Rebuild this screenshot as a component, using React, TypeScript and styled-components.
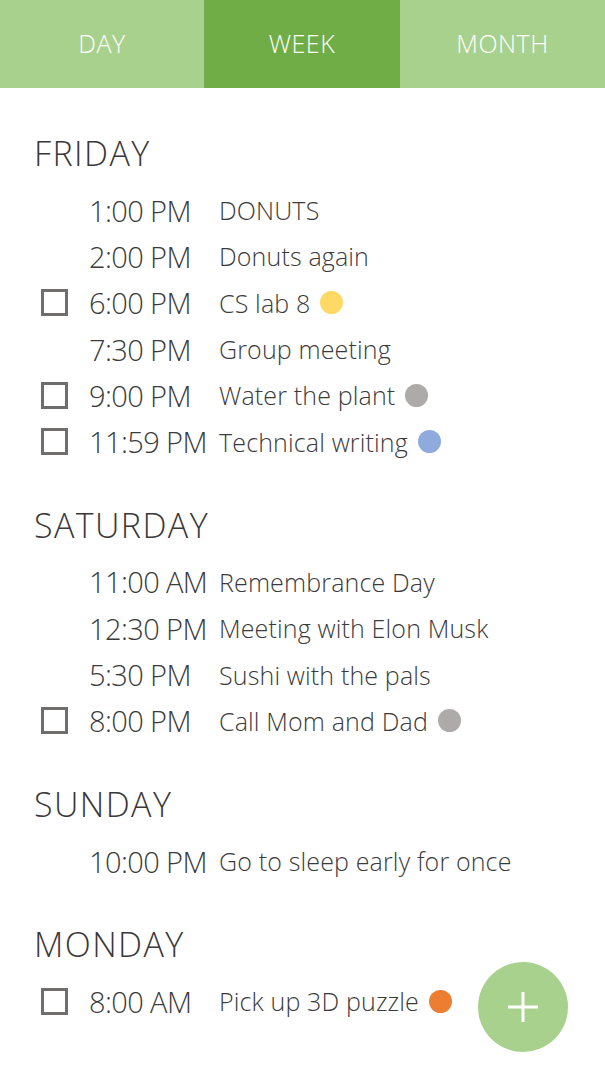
import React from "react";
import styled, { createGlobalStyle } from "styled-components";

const Global = createGlobalStyle`
  html, body { margin: 0; padding: 0; background: #ffffff; }
  body { font-family: "Open Sans", "Noto Sans", sans-serif; }
`;

const Page = styled.div`
  width: 605px;
  min-height: 1077px;
  position: relative;
  background: #fff;
  overflow: hidden;
`;

const Tabs = styled.nav`
  display: grid;
  grid-template-columns: 204px 196px 205px;
  height: 88px;
`;

const Tab = styled.div<{ $active?: boolean }>`
  display: flex;
  align-items: center;
  justify-content: center;
  padding-bottom: 2px;
  background: ${(p) => (p.$active ? "#70ad47" : "#a9d18e")};
  color: #ffffff;
  font-weight: 300;
  font-size: 25px;
  letter-spacing: 0.5px;
`;

const Content = styled.main`
  padding: 45px 0 0 34px;
  display: flex;
  flex-direction: column;
  gap: 40px;
`;

const Section = styled.section`
  display: flex;
  flex-direction: column;
`;

const DayHeading = styled.h2`
  margin: 0 0 14px 0;
  height: 40px;
  line-height: 40px;
  font-size: 34px;
  font-weight: 300;
  color: #3a3838;
  letter-spacing: 1.4px;
`;

const Row = styled.div`
  display: grid;
  grid-template-columns: 55px 130px auto;
  align-items: center;
  height: 46.3px;
`;

const CheckSlot = styled.div`
  display: flex;
  align-items: center;
  padding-left: 7px;
`;

const Box = styled.span`
  display: block;
  width: 27px;
  height: 27px;
  box-sizing: border-box;
  border: 3px solid #706d6d;
`;

const Time = styled.span`
  font-size: 29px;
  font-weight: 300;
  color: #3b3b3b;
  letter-spacing: -0.6px;
  white-space: nowrap;
`;

const Title = styled.span`
  display: flex;
  align-items: center;
  gap: 10px;
  font-size: 25px;
  font-weight: 300;
  color: #3b3b3b;
  letter-spacing: 0.15px;
  white-space: nowrap;
`;

const Dot = styled.span<{ $color: string }>`
  display: inline-block;
  width: 23px;
  height: 23px;
  border-radius: 50%;
  background: ${(p) => p.$color};
`;

const Fab = styled.button`
  position: absolute;
  left: 478px;
  top: 962px;
  width: 90px;
  height: 90px;
  border-radius: 50%;
  border: none;
  padding: 0;
  background: #a9d18e;
  display: flex;
  align-items: center;
  justify-content: center;
  cursor: pointer;
`;

type Item = { time: string; title: string; check?: boolean; dot?: string };
type Day = { name: string; items: Item[] };

const days: Day[] = [
  {
    name: "FRIDAY",
    items: [
      { time: "1:00 PM", title: "DONUTS" },
      { time: "2:00 PM", title: "Donuts again" },
      { time: "6:00 PM", title: "CS lab 8", check: true, dot: "#ffd966" },
      { time: "7:30 PM", title: "Group meeting" },
      { time: "9:00 PM", title: "Water the plant", check: true, dot: "#aeaaaa" },
      { time: "11:59 PM", title: "Technical writing", check: true, dot: "#8faadc" },
    ],
  },
  {
    name: "SATURDAY",
    items: [
      { time: "11:00 AM", title: "Remembrance Day" },
      { time: "12:30 PM", title: "Meeting with Elon Musk" },
      { time: "5:30 PM", title: "Sushi with the pals" },
      { time: "8:00 PM", title: "Call Mom and Dad", check: true, dot: "#aeaaaa" },
    ],
  },
  {
    name: "SUNDAY",
    items: [{ time: "10:00 PM", title: "Go to sleep early for once" }],
  },
  {
    name: "MONDAY",
    items: [{ time: "8:00 AM", title: "Pick up 3D puzzle", check: true, dot: "#ed7d31" }],
  },
];

export default function App() {
  return (
    <Page>
      <Global />
      <Tabs>
        <Tab>DAY</Tab>
        <Tab $active>WEEK</Tab>
        <Tab>MONTH</Tab>
      </Tabs>
      <Content>
        {days.map((d) => (
          <Section key={d.name}>
            <DayHeading>{d.name}</DayHeading>
            {d.items.map((it) => (
              <Row key={it.time + it.title}>
                <CheckSlot>{it.check && <Box />}</CheckSlot>
                <Time>{it.time}</Time>
                <Title>
                  {it.title}
                  {it.dot && <Dot $color={it.dot} />}
                </Title>
              </Row>
            ))}
          </Section>
        ))}
      </Content>
      <Fab aria-label="Add">
        <svg width="30" height="30" viewBox="0 0 30 30">
          <path d="M15 0 V30 M0 15 H30" stroke="#ffffff" strokeWidth="3" />
        </svg>
      </Fab>
    </Page>
  );
}
